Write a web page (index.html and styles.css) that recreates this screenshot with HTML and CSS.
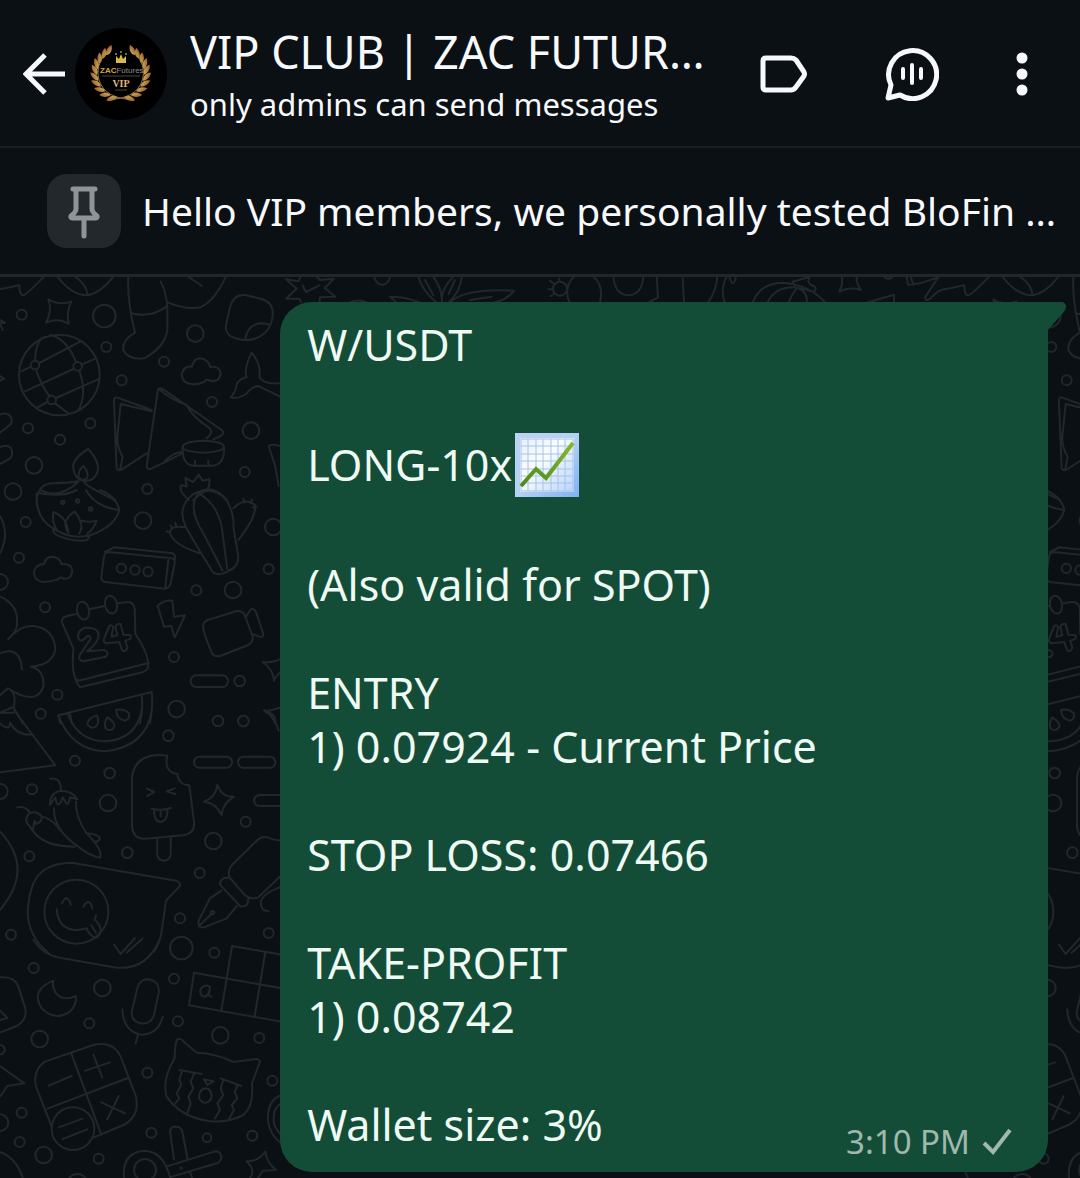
FILE: index.html
```html
<!DOCTYPE html>
<html lang="en">
<head>
<meta charset="utf-8">
<meta name="viewport" content="width=device-width, initial-scale=1">
<title>VIP CLUB | ZAC FUTURES</title>
<link rel="stylesheet" href="styles.css">
</head>
<body>
<header class="topbar">
  <button class="icon-button back" type="button" aria-label="Back">
    <svg width="42" height="42" viewBox="0 0 42 42" fill="none" stroke="currentColor" stroke-width="5"><path d="M22 2 3 21l19 19M3 21h39"/></svg>
  </button>
  <svg class="avatar" viewBox="0 0 92 92" role="img" aria-label="Group picture">
    <defs>
      <linearGradient id="gold" x1="0" y1="0" x2="0" y2="1"><stop offset="0" stop-color="#c4aa60"/><stop offset="1" stop-color="#a85f28"/></linearGradient>
      <path id="leaf" d="M46 71Q43 69 39 71Q36 73 35 76Q42 77 46 71Z"/>
      <g id="branch">
        <use href="#leaf" transform="rotate(8 46 46)"/><use href="#leaf" transform="rotate(25 46 46)"/>
        <use href="#leaf" transform="rotate(41 46 46)"/><use href="#leaf" transform="rotate(57 46 46)"/>
        <use href="#leaf" transform="rotate(72 46 46)"/><use href="#leaf" transform="rotate(87 46 46)"/>
        <use href="#leaf" transform="rotate(101 46 46)"/><use href="#leaf" transform="rotate(115 46 46)"/>
        <use href="#leaf" transform="rotate(129 46 46)"/><use href="#leaf" transform="rotate(142 46 46)"/>
        <path d="M54 73Q24 70 22 46Q22 30 34 22" fill="none" stroke="#a07a40" stroke-width="1"/>
      </g>
    </defs>
    <circle cx="46" cy="46" r="46" fill="#000"/>
    <g fill="url(#gold)" transform="translate(2 2) scale(.95)"><use href="#branch"/><use href="#branch" transform="matrix(-1 0 0 1 92 0)"/></g>
    <path d="M41 28l3 3 2-5 2 5 3-3v7H41Z" fill="#d8b94e"/>
    <circle cx="41" cy="26" r="1" fill="#a88a40"/><circle cx="46" cy="24" r="1" fill="#a88a40"/><circle cx="51" cy="26" r="1" fill="#a88a40"/>
    <text x="25" y="45" class="logo-name"><tspan class="logo-strong">ZAC</tspan>Futures</text>
    <path d="M27 48h38M40 62h12" stroke="#4b463f" stroke-width="1"/>
    <text x="46" y="59" class="logo-vip">VIP</text>
  </svg>
  <div class="heading">
    <h1 class="title">VIP CLUB | ZAC FUTUR…</h1>
    <p class="subtitle">only admins can send messages</p>
  </div>
  <nav class="actions" aria-label="Chat actions">
    <button class="icon-button" type="button" aria-label="Label">
      <svg width="48" height="38" viewBox="0 0 48 38" fill="none" stroke="currentColor" stroke-width="5" stroke-linejoin="round"><path d="M6 3H31Q34 3 36 5L44 17Q45 19 44 21L36 32Q34 35 31 35H6Q3 35 3 32V6Q3 3 6 3Z"/></svg>
    </button>
    <button class="icon-button" type="button" aria-label="Voice chat">
      <svg width="54" height="54" viewBox="0 0 54 54" fill="none" stroke="currentColor" stroke-width="5" stroke-linecap="round" stroke-linejoin="round"><path d="M6 38A24 24 0 1 1 15 48L3 51Z"/><path d="M18 22v9M27 18v18M36 22v9" stroke-width="4"/></svg>
    </button>
    <button class="icon-button" type="button" aria-label="More options">
      <svg width="12" height="44" viewBox="0 0 24 88" fill="currentColor"><circle cx="12" cy="12" r="11"/><circle cx="12" cy="44" r="11"/><circle cx="12" cy="76" r="11"/></svg>
    </button>
  </nav>
</header>

<section class="pinned" aria-label="Pinned message">
  <span class="pin-tile">
    <svg width="34" height="56" viewBox="0 -1 34 56" fill="none" stroke="currentColor" stroke-width="5" stroke-linecap="round" stroke-linejoin="round"><path d="M6 5H28M9 6V25Q9 28 4 32Q3 34 6 34H28Q31 34 30 32Q25 28 25 25V6M17 35V52"/></svg>
  </span>
  <p class="pinned-text">Hello VIP members, we personally tested BloFin …</p>
</section>

<main class="chat">
  <svg class="wallpaper" aria-hidden="true">
    <defs>
      <g id="doodles" fill="none" stroke="#22272b" stroke-width="6" stroke-linecap="round" stroke-linejoin="round">
        <!-- band 1: globe, sock, sandwich, candle -->
        <g transform="translate(0 -7) scale(.33333)">
          <path d="M0 58 58 46Q58 76 70 76Q80 74 132 20M172 20Q215 75 260 76Q300 72 340 20M225 20Q262 45 262 76"/>
          <path d="M145 88Q178 108 214 94Q198 128 206 162Q175 142 138 158Q158 122 145 88Z"/>
          <circle cx="65" cy="134" r="15"/><circle cx="313" cy="138" r="34"/><circle cx="586" cy="191" r="25"/><circle cx="319" cy="231" r="15"/><circle cx="492" cy="275" r="15"/><circle cx="365" cy="331" r="15"/><circle cx="636" cy="396" r="15"/><circle cx="753" cy="482" r="25"/><circle cx="84" cy="475" r="15"/><circle cx="271" cy="460" r="15"/><circle cx="180" cy="509" r="15"/><circle cx="102" cy="586" r="25"/><circle cx="39" cy="665" r="25"/><circle cx="442" cy="657" r="15"/><circle cx="734" cy="606" r="15"/>
          <path d="M385 20Q381 90 405 188Q366 210 370 240Q385 272 435 264Q495 230 502 180V110Q498 62 482 35M395 130Q450 145 500 110"/>
          <path d="M502 97Q560 120 600 112Q640 98 678 20M565 20 606 48"/>
          <path d="M735 75 785 87Q822 98 818 138Q815 170 795 188Q768 212 735 210Q672 205 678 165L690 112Q700 72 735 75ZM735 210Q742 165 780 160Q795 160 808 164"/>
          <circle cx="178" cy="315" r="121"/><circle cx="105" cy="285" r="13"/><circle cx="233" cy="289" r="13"/><circle cx="155" cy="390" r="13"/>
          <path d="M64 304 93 290M118 279 240 215M75 364 220 297M246 283 286 266M112 412 142 396M168 384 294 328M105 271Q108 208 135 201M108 299Q125 350 148 378M165 400 205 430M150 195Q200 205 228 276M238 302Q262 370 235 422"/>
          <path d="M0 488 32 463Q40 450 30 438Q20 426 0 434M0 582 30 566Q42 552 32 534Q22 522 0 532M0 150l15 8-15 2 8 20M0 318 12 326 0 332"/>
          <path d="M572 342Q545 338 545 312Q552 286 576 290Q580 266 600 265Q626 268 630 291Q658 286 662 310Q658 338 630 332Q618 325 615 335Q595 345 572 342Z"/>
          <path d="M755 248Q785 285 778 322Q792 345 845 339M845 382Q800 360 775 348Q755 350 738 372Q712 388 692 382Q708 365 710 342Q722 325 740 322Q730 300 755 248"/>
          <path d="M455 420 350 382Q340 382 342 398L350 595Q354 604 366 598L440 550M455 424 362 402 352 500Q350 530 368 560L360 600M474 358Q480 352 490 358L665 480Q676 490 662 498L640 508M474 358 440 588Q440 600 454 596L548 550M478 358Q510 388 560 405Q575 440 630 475Q640 490 620 505M492 578Q510 550 548 545"/>
          <ellipse cx="610" cy="530" rx="62" ry="18"/><path d="M548 530Q545 584 580 587H640Q675 582 672 530M585 572v12M625 572v12"/>
          <path d="M265 537Q300 575 293 605Q282 635 252 633Q218 625 220 582Q230 556 265 537ZM250 588Q266 604 262 624Q248 636 236 622Q234 600 250 588Z"/>
          <path d="M110 705Q108 640 160 640Q215 638 236 634M120 660Q180 690 236 634M252 636Q260 650 345 690"/>
          <path d="M566 690Q532 660 545 645L560 650 556 624 580 636 596 614 608 632 628 628Q630 650 620 660Q600 670 580 690M590 668Q640 640 680 690M845 530Q820 520 806 528L826 590 836 648"/>
        </g>
        <!-- band 2: pot, cassette, calendar, cactus, camera -->
        <g transform="translate(0 213) scale(.33333)">
          <path d="M110 10Q106 90 165 118Q215 150 270 136Q345 110 358 60Q350 20 300 0M118 10Q190 22 230 0M258 0Q285 50 356 60M160 118Q158 130 172 136Q225 158 262 150L270 136M160 66Q200 80 205 128M160 66Q155 100 172 122M205 128Q180 95 224 64Q255 105 238 130M245 92Q270 98 290 92Q280 120 262 130"/>
          <circle cx="188" cy="37" r="5"/><circle cx="233" cy="33" r="5"/><circle cx="272" cy="57" r="5"/>
          <circle cx="77" cy="96" r="15"/><circle cx="429" cy="92" r="25"/><circle cx="57" cy="203" r="15"/><circle cx="820" cy="111" r="25"/><circle cx="806" cy="237" r="15"/><circle cx="589" cy="301" r="15"/><circle cx="699" cy="300" r="25"/><circle cx="135" cy="352" r="15"/><circle cx="522" cy="501" r="15"/><circle cx="719" cy="573" r="16"/><circle cx="172" cy="614" r="15"/><circle cx="122" cy="671" r="15"/><circle cx="530" cy="657" r="25"/><circle cx="0" cy="276" r="24"/>
          <path d="M127 276Q100 270 102 245Q108 222 132 222Q136 200 158 200Q182 204 184 222Q215 220 217 242Q214 270 190 266Q180 258 174 268Q150 276 127 276ZM0 78Q30 130 0 190"/>
          <path d="M325 186 515 205Q526 208 524 220L512 280Q508 296 494 296L315 276Q302 272 304 260L312 200Q314 188 325 186ZM315 186 342 172 518 190Q528 195 524 208M505 210 496 292"/>
          <circle cx="364" cy="235" r="14"/><circle cx="405" cy="240" r="14"/><circle cx="444" cy="245" r="14"/>
          <path d="M640 248Q590 170 556 108Q530 50 580 12Q640-15 680 30Q705 80 700 110L715 200Q715 230 690 240Q660 260 640 248ZM596 10Q560 50 610 130L668 242M596 10Q650 40 665 110L682 238M556 112Q510 105 510 130Q520 165 600 190M700 55Q735 20 765 45Q770 80 715 150M512 106l4 8M526 98l3 12M500 124l10 2M730 26l4 12M756 28l-4 12M770 50l-12 2"/>
          <path d="M230 372 200 378Q182 385 186 398L220 475 218 520Q220 570 240 592L430 546Q446 540 445 520 440 480 406 432L404 355Q400 335 380 336L354 340M268 358 314 348M230 568Q235 574 245 570L442 520"/>
          <ellipse cx="249" cy="362" rx="18" ry="27" transform="rotate(-12 249 362)"/><ellipse cx="333" cy="344" rx="18" ry="27" transform="rotate(-12 333 344)"/>
          <path d="M236 448Q228 425 252 414Q290 410 296 432Q298 455 262 484L312 480Q330 486 318 500L250 514Q232 510 240 494L270 450Q275 436 262 438Q252 450 244 452ZM328 408Q336 402 340 412L334 440 352 436 346 410Q352 398 362 402L370 434 392 436Q398 448 376 452L382 474Q374 490 366 480L358 456 318 460Q308 454 312 446Z"/>
          <path d="M473 347Q492 330 517 332L522 380 555 376 524 443 514 408 492 410ZM610 402Q605 418 636 490Q645 502 660 498L745 465Q760 455 758 440L734 375Q728 362 710 363L630 388Q615 392 610 402ZM738 380 752 358Q762 354 768 366L790 432Q790 444 778 440L758 432M845 505Q820 520 788 516Q820 538 822 572Q832 550 845 545"/>
          <rect x="572" y="556" width="112" height="35" rx="17"/>
          <path d="M0 320Q60 345 50 410Q46 430 24 448Q60 405 100 408Q160 415 166 475Q160 525 92 530Q135 540 130 590Q110 650 24 595L0 615M0 490Q60 465 66 538M24 595Q50 605 42 650L0 668M42 655 68 700M175 676 455 606Q460 640 450 700M425 616Q430 660 420 700M210 670 215 700M175 676 180 700M845 652Q810 662 794 664Q815 672 825 700"/>
        </g>
        <!-- band 3: melon, ice cream, peppers, sticker face, pen -->
        <g transform="translate(0 433) scale(.33333)">
          <path d="M175 16Q215 120 315 124Q440 110 455 0M205 16Q235 92 315 94Q410 88 425 0M175 16 210 8M290 16Q300 30 290 48Q275 60 262 44Q262 25 290 16ZM322 22Q308 45 320 58Q335 65 344 48Q342 34 322 22ZM348 0Q350 28 376 32Q392 25 386 8Q368 -6 348 0ZM42 0 166 166 0 187M0 8H40M0 40Q10 52 20 52 30 55 30 38Q50 75 92 74"/>
          <circle cx="654" cy="33" r="16"/><circle cx="730" cy="33" r="16"/><circle cx="505" cy="77" r="16"/><circle cx="225" cy="152" r="15"/><circle cx="329" cy="189" r="16"/><circle cx="96" cy="238" r="15"/><circle cx="324" cy="279" r="25"/><circle cx="88" cy="439" r="15"/><circle cx="382" cy="428" r="16"/><circle cx="737" cy="335" r="15"/><circle cx="640" cy="393" r="25"/><circle cx="599" cy="489" r="15"/><circle cx="540" cy="625" r="15"/><circle cx="33" cy="674" r="15"/><circle cx="806" cy="669" r="15"/><circle cx="0" cy="244" r="23"/>
          <rect x="582" y="140" width="114" height="33" rx="16"/><rect x="714" y="140" width="112" height="33" rx="16"/><path d="M845 255H780Q762 258 762 272 764 288 780 288H845M792 0Q828 12 826 34 830 48 836 62"/>
          <path d="M502 137Q408 125 396 200V350Q400 388 435 386L550 376Q586 370 582 335L568 226Q535 225 532 192Q490 185 502 137ZM472 386V435Q475 452 492 452 512 450 512 432V384M440 235 462 246 442 258M524 235 500 244 526 252M455 296Q485 304 512 294M462 300Q462 335 482 336 505 332 502 298M482 305v14"/>
          <path d="M652 225Q665 262 702 260Q668 280 665 315Q648 278 612 275Q648 262 652 225Z"/>
          <path d="M150 206Q182 200 183 240M52 292Q76 288 90 308M150 285Q150 245 185 242Q220 245 232 268L210 262Q208 280 200 282L188 262 Q180 290 170 280L166 262ZM162 295Q160 360 235 410Q270 438 300 443Q310 420 260 370Q225 320 228 275M90 350Q68 330 88 310Q110 300 125 320Q128 335 108 342L104 332 98 362ZM128 320Q160 330 180 360M98 362Q130 410 225 410M258 370Q295 372 300 386Q295 398 280 394"/>
          <path d="M145 728Q85 680 83 605Q85 560 100 520Q125 460 215 458L528 512Q545 518 538 530L498 572 484 670Q478 700 462 725"/>
          <circle cx="229" cy="605" r="96"/><path d="M170 598Q175 660 232 660L262 655M284 632 288 615M186 580Q200 548 213 584M250 590Q270 560 277 596M260 658Q280 690 294 680 312 660 290 634M274 646 288 668M342 704 362 732 405 684M380 728 427 686"/>
          <path d="M845 392Q820 390 802 382Q785 378 770 392L696 465Q680 485 690 504L735 556Q755 570 775 562L845 495M690 504Q660 500 660 524L720 588Q745 595 745 565M664 542 630 565 596 632Q592 655 612 652L680 625 710 588M600 645 636 610M845 530Q760 560 790 600L805 604"/><circle cx="638" cy="608" r="5"/>
          <path d="M0 365Q105 475 0 600"/>
        </g>
        <!-- band 4: moon, mic, calculator, cat, board -->
        <g transform="translate(0 663) scale(.33333)">
          <path d="M100 0Q130 45 180 53L350 83Q440 90 478 0M160 122Q90 150 125 205Q165 245 210 215Q232 190 227 168Q190 185 168 160Q155 140 160 122ZM442 118Q480 122 476 158L462 225Q452 255 420 250Q390 240 396 212L412 145Q420 118 442 118ZM367 208Q370 275 425 284Q475 282 488 230M414 284 407 310"/>
          <circle cx="544" cy="24" r="34"/><circle cx="643" cy="38" r="15"/><circle cx="101" cy="84" r="15"/><circle cx="307" cy="144" r="25"/><circle cx="522" cy="116" r="15"/><circle cx="268" cy="250" r="15"/><circle cx="534" cy="244" r="15"/><circle cx="119" cy="297" r="25"/><circle cx="661" cy="286" r="25"/><circle cx="778" cy="294" r="15"/><circle cx="442" cy="398" r="15"/><circle cx="817" cy="422" r="15"/><circle cx="65" cy="518" r="15"/><circle cx="59" cy="606" r="15"/><circle cx="131" cy="645" r="25"/><circle cx="454" cy="578" r="15"/><circle cx="621" cy="593" r="13"/><circle cx="757" cy="587" r="15"/><circle cx="296" cy="656" r="15"/><circle cx="0" cy="329" r="14"/><circle cx="0" cy="548" r="25"/><circle cx="232" cy="734" r="32"/>
          <path d="M0 112Q45 108 55 140L76 205Q82 240 50 258L0 278M0 212 22 234 0 240M0 378 73 430 22 438 0 470M0 636Q50 655 68 714"/>
          <path d="M845 44 696 18 664 212M845 245 567 196 582 98 845 145M796 36 764 228M604 166Q595 148 612 138 630 132 630 150 625 168 612 170ZM630 140 625 165 634 170"/>
          <path d="M135 365 280 315Q340 302 362 350L408 470Q420 530 370 555L282 592M155 560 108 440Q98 390 135 365M215 343 304 584M142 506 384 414M146 437 215 408M256 392 330 367M280 344 307 413M304 487 375 520M356 468 322 538"/>
          <circle cx="219" cy="566" r="64"/><path d="M176 562 248 536M188 597 262 568"/>
          <path d="M524 355Q525 310 532 298Q540 292 550 304L590 338Q650 340 700 366L770 357Q785 360 776 376L756 430Q762 500 730 525Q680 550 625 543Q540 530 500 470Q485 420 524 355ZM538 390 605 402M545 395 538 420 544 435 530 460 538 475 526 490M582 402 572 425 580 445 565 470 572 490 562 520M662 415 724 438M670 420 662 445 670 465 652 490 660 510 645 535M712 438 704 455 712 475 695 495 702 510 688 535M612 418 640 424 622 435ZM616 445Q595 450 598 475 605 490 618 488 638 482 634 462 630 445 616 445Z"/>
          <path d="M522 658 510 575Q512 558 530 560 545 560 548 580L562 654M498 680 645 634Q662 634 664 650 664 664 650 670L510 712M372 714Q365 640 430 632Q490 632 510 712M570 695 576 714"/><circle cx="435" cy="690" r="33"/><circle cx="543" cy="684" r="2"/>
          <path d="M796 635Q800 668 828 690L788 692 774 714M740 664Q775 665 796 635M740 664Q768 690 750 714M845 465Q800 480 804 545Q812 590 845 610M845 490Q815 505 822 550Q830 575 845 585"/>
        </g>
        <!-- doodles that show along the top edge -->
        <g transform="translate(280 -7) scale(.33333)">
          <path d="M18 28 55 34 62 20M110 20 120 30 162 26 134 54 166 80 120 82 118 98M18 86 50 56 18 28M18 86 58 86 64 98M68 46 78 66 118 46M282 20Q290 45 308 44 325 42 330 20M208 98Q235 85 262 98M330 80Q380 80 420 98M330 80 350 98M415 20Q425 60 470 98M460 20Q488 60 486 98M545 20Q542 65 505 98M520 20Q490 50 486 80M435 30 460 76M525 30 506 72M510 98Q550 55 702 62Q680 90 640 98M570 90 635 80"/>
          <circle cx="840" cy="56" r="21"/><path d="M820 40 810 32M814 58h-8M822 72l-10 6M838 34v-8M868 98Q850 50 882 20M940 20Q972 45 960 98M1000 20Q1005 76 1048 76 1086 72 1090 20M1130 20 1134 82 1108 96"/>
        </g>
        <g transform="translate(680 -7) scale(.33333)">
          <path d="M8 20 12 98M112 20Q110 60 84 98M140 20Q120 55 134 98M148 20Q160 60 168 20M218 98Q240 38 310 38Q390 45 436 98M262 98Q285 50 345 52M350 54Q335 75 326 98M355 54Q385 70 380 98M345 48 338 35 390 20Q375 40 405 50 410 62 400 66 375 55 350 54M485 20Q490 45 478 64Q510 50 543 60Q528 40 530 20M612 20Q625 32 638 20M560 98 642 74V98M680 20 684 44 720 40 775 22M692 20 700 44M776 20 735 82Q735 94 748 88Q780 55 795 58"/>
        </g>
      </g>
    </defs>
    <use href="#doodles"/>
    <use href="#doodles" x="945"/>
  </svg>

  <article class="bubble">
    <svg class="tail" width="30" height="28" viewBox="0 0 30 28" aria-hidden="true"><path d="M0 0H25Q30 0 30 5Q30 8 27 11L12 28H0Z" fill="currentColor"/></svg>
    <div class="message">
      <p>W/USDT</p>
      <p class="with-emoji">LONG-10x<svg class="emoji" viewBox="0 0 64 64" role="img" aria-label="Chart increasing">
        <defs>
          <linearGradient id="frame" x1="0" y1="0" x2="1" y2="1"><stop offset="0" stop-color="#bdd3f2"/><stop offset=".5" stop-color="#b4d0f5"/><stop offset="1" stop-color="#7fb2f3"/></linearGradient>
          <linearGradient id="paper" x1="0" y1="0" x2="1" y2="1"><stop offset="0" stop-color="#e4eefc"/><stop offset=".4" stop-color="#fbfdff"/><stop offset="1" stop-color="#b6d4fb"/></linearGradient>
          <linearGradient id="trend" x1="0" y1="1" x2="1" y2="0"><stop offset="0" stop-color="#4d8a1c"/><stop offset="1" stop-color="#86b82c"/></linearGradient>
        </defs>
        <rect width="64" height="64" fill="url(#frame)"/><rect x="5" y="5" width="54" height="54" fill="url(#paper)"/>
        <path d="M6 6V58M13 6V58M21 6V58M28 6V58M36 6V58M43 6V58M50 6V58M58 6V58M6 6H58M6 13H58M6 21H58M6 28H58M6 36H58M6 43H58M6 50H58M6 58H58" stroke="#a9c2e6" stroke-width="1"/>
        <path d="M6 53 21 36 31 45 58 10" fill="none" stroke="url(#trend)" stroke-width="4"/>
      </svg></p>
      <p>(Also valid for SPOT)</p>
      <p>ENTRY<br>1) 0.07924 - Current Price</p>
      <p>STOP LOSS: 0.07466</p>
      <p>TAKE-PROFIT<br>1) 0.08742</p>
      <p>Wallet size: 3%</p>
    </div>
    <footer class="meta">
      <time>3:10 PM</time>
      <svg width="30" height="28" viewBox="0 0 30 28" fill="none" stroke="currentColor" stroke-width="4" role="img" aria-label="Sent"><path d="M2 15 11 24 28 2"/></svg>
    </footer>
  </article>
</main>
</body>
</html>
```
FILE: styles.css
```css
* {
  box-sizing: border-box;
}

body {
  margin: 0;
  min-height: 100vh;
  display: flex;
  flex-direction: column;
  background: #0b1014;
  color: #f7f9fc;
  font-family: "Noto Sans", "Open Sans", sans-serif;
}

h1,
p {
  margin: 0;
  font-weight: 400;
}

.icon-button {
  display: flex;
  padding: 0;
  border: 0;
  background: none;
  color: inherit;
  cursor: pointer;
}

.topbar {
  display: flex;
  align-items: center;
  padding: 22px 52px 20px 23px;
  border-bottom: 2px solid #1a1f23;
}

.avatar {
  flex: none;
  width: 92px;
  height: 92px;
  margin: 0 23px 0 10px;
}

.logo-name {
  font-family: "Liberation Sans", sans-serif;
  font-size: 8px;
  fill: #8d8b90;
}

.logo-strong {
  font-weight: 700;
  fill: #d9a63c;
}

.logo-vip {
  font-family: "Liberation Serif", serif;
  font-size: 10px;
  font-weight: 700;
  text-anchor: middle;
  fill: #e0b878;
}

.heading {
  flex: 1;
  min-width: 0;
}

.title,
.subtitle,
.pinned-text {
  overflow: hidden;
  text-overflow: ellipsis;
  white-space: nowrap;
}

.title {
  font-size: 45px;
  line-height: 60px;
}

.subtitle {
  font-size: 31px;
  line-height: 44px;
}

.actions {
  display: flex;
  align-items: center;
  gap: 77px;
}

.pinned {
  display: flex;
  align-items: center;
  gap: 21px;
  padding: 26px 16px 26px 47px;
  border-bottom: 3px solid #22272b;
}

.pin-tile {
  flex: none;
  display: flex;
  align-items: center;
  justify-content: center;
  width: 74px;
  height: 74px;
  border-radius: 20px;
  background: #23282c;
  color: #8f9497;
}

.pinned-text {
  flex: 1;
  min-width: 0;
  font-size: 39px;
  line-height: 54px;
}

.chat {
  position: relative;
  flex: 1;
  display: flex;
  flex-direction: column;
  align-items: flex-end;
  padding: 25px 32px 7px;
  overflow: hidden;
}

.wallpaper {
  position: absolute;
  inset: 0;
  width: 100%;
  height: 100%;
}

.bubble {
  position: relative;
  display: flex;
  align-items: flex-end;
  justify-content: space-between;
  width: calc(74% + 16px);
  padding: 16px 36px 8px 27px;
  border-radius: 32px 0 32px 32px;
  background: #144d37;
  color: #effaf4;
}

.tail {
  position: absolute;
  top: 0;
  right: -18px;
  color: #144d37;
}

.message {
  padding-bottom: 12px;
  font-size: 43px;
  line-height: 54px;
}

.message p + p {
  margin-top: 54px;
}

.message .with-emoji {
  display: flex;
  align-items: center;
  gap: 3px;
  height: 78px;
}

.emoji {
  width: 64px;
  height: 64px;
}

.meta {
  display: flex;
  align-items: center;
  gap: 12px;
  color: #a1b8af;
  font-size: 33px;
  line-height: 44px;
}
```
